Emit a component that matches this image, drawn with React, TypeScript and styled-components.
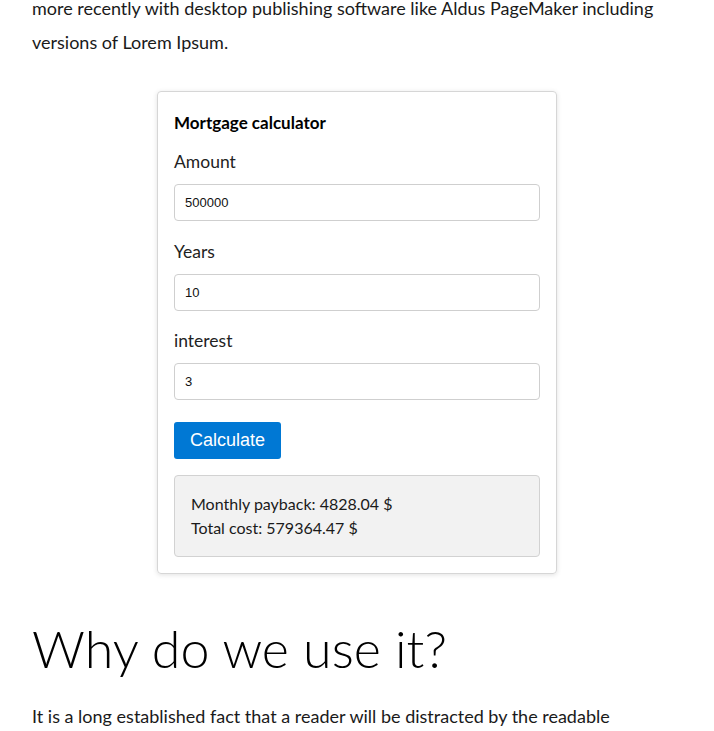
import React, {useState} from "react";
import styled, {createGlobalStyle} from "styled-components";

const GlobalStyle = createGlobalStyle`
  html, body {
    margin: 0;
    padding: 0;
    background: #ffffff;
  }
  body {
    font-family: "Lato", "Noto Sans", sans-serif;
    color: #111;
  }
`

const calcMortgage = (amount: number, years: number, interest: number) => {
    const r = interest / 100 / 12
    const n = years * 12
    const monthly = r === 0 ? amount / n : (amount * r) / (1 - Math.pow(1 + r, -n))
    return {monthly, total: monthly * n}
}

export default function App() {
    const [amount, setAmount] = useState('500000')
    const [years, setYears] = useState('10')
    const [interest, setInterest] = useState('3')
    const [result, setResult] = useState(() => calcMortgage(500000, 10, 3))

    const handleCalculate = () => {
        setResult(calcMortgage(parseFloat(amount) || 0, parseFloat(years) || 0, parseFloat(interest) || 0))
    }

    return (
        <Page>
            <GlobalStyle/>
            <Text $first>
                more recently with desktop publishing software like Aldus PageMaker including
                versions of Lorem Ipsum.
            </Text>
            <Card>
                <Title>Mortgage calculator</Title>
                <Label>Amount</Label>
                <Input value={amount} onChange={e => setAmount(e.target.value)}/>
                <Label>Years</Label>
                <Input value={years} onChange={e => setYears(e.target.value)}/>
                <Label>interest</Label>
                <Input value={interest} onChange={e => setInterest(e.target.value)}/>
                <Button onClick={handleCalculate}>Calculate</Button>
                <Result>
                    <div>Monthly payback: {result.monthly.toFixed(2)} $</div>
                    <div>Total cost: {result.total.toFixed(2)} $</div>
                </Result>
            </Card>
            <Heading>Why do we use it?</Heading>
            <Text>It is a long established fact that a reader will be distracted by the readable</Text>
        </Page>
    )
}

const Page = styled.div`
  padding: 0 32px;
  max-width: 650px;
`

const Text = styled.p<{ $first?: boolean }>`
  font-size: 18px;
  line-height: 34px;
  margin: ${p => p.$first ? '-9px 0 0' : '0'};
  color: #1a1a1a;
`

const Card = styled.div`
  width: 366px;
  margin: 32px auto 0;
  padding: 16px;
  border: 1px solid #d6d6d6;
  border-radius: 4px;
  box-shadow: 0 1px 5px rgba(0, 0, 0, 0.12);
  display: flex;
  flex-direction: column;
  align-items: flex-start;
`

const Title = styled.h3`
  margin: 0;
  font-size: 17px;
  line-height: 30px;
  font-weight: 700;
  color: #000;
`

const Label = styled.label`
  margin-top: 12px;
  font-size: 17.5px;
  line-height: 24px;
  color: #222;
  &:nth-of-type(n+2) {
    margin-top: 18.5px;
  }
`

const Input = styled.input`
  box-sizing: border-box;
  width: 100%;
  height: 37px;
  margin-top: 10px;
  padding: 0 10px;
  border: 1px solid #cfcfcf;
  border-radius: 4px;
  font-family: "Liberation Sans", Arial, sans-serif;
  font-size: 13px;
  color: #111;
  outline: none;
`

const Button = styled.button`
  margin-top: 22px;
  height: 37px;
  padding: 0 16px;
  border: none;
  border-radius: 3px;
  background: #0078d4;
  color: #fff;
  font-family: "Liberation Sans", Arial, sans-serif;
  font-size: 18px;
  cursor: pointer;
`

const Result = styled.div`
  box-sizing: border-box;
  width: 100%;
  margin-top: 16px;
  padding: 16px;
  background: #f2f2f2;
  border: 1px solid #d2d2d2;
  border-radius: 4px;
  font-size: 16px;
  line-height: 24px;
  color: #1a1a1a;
`

const Heading = styled.h1`
  margin: 43px 0 20px;
  font-size: 52px;
  line-height: 62px;
  font-weight: 300;
  color: #000;
`
